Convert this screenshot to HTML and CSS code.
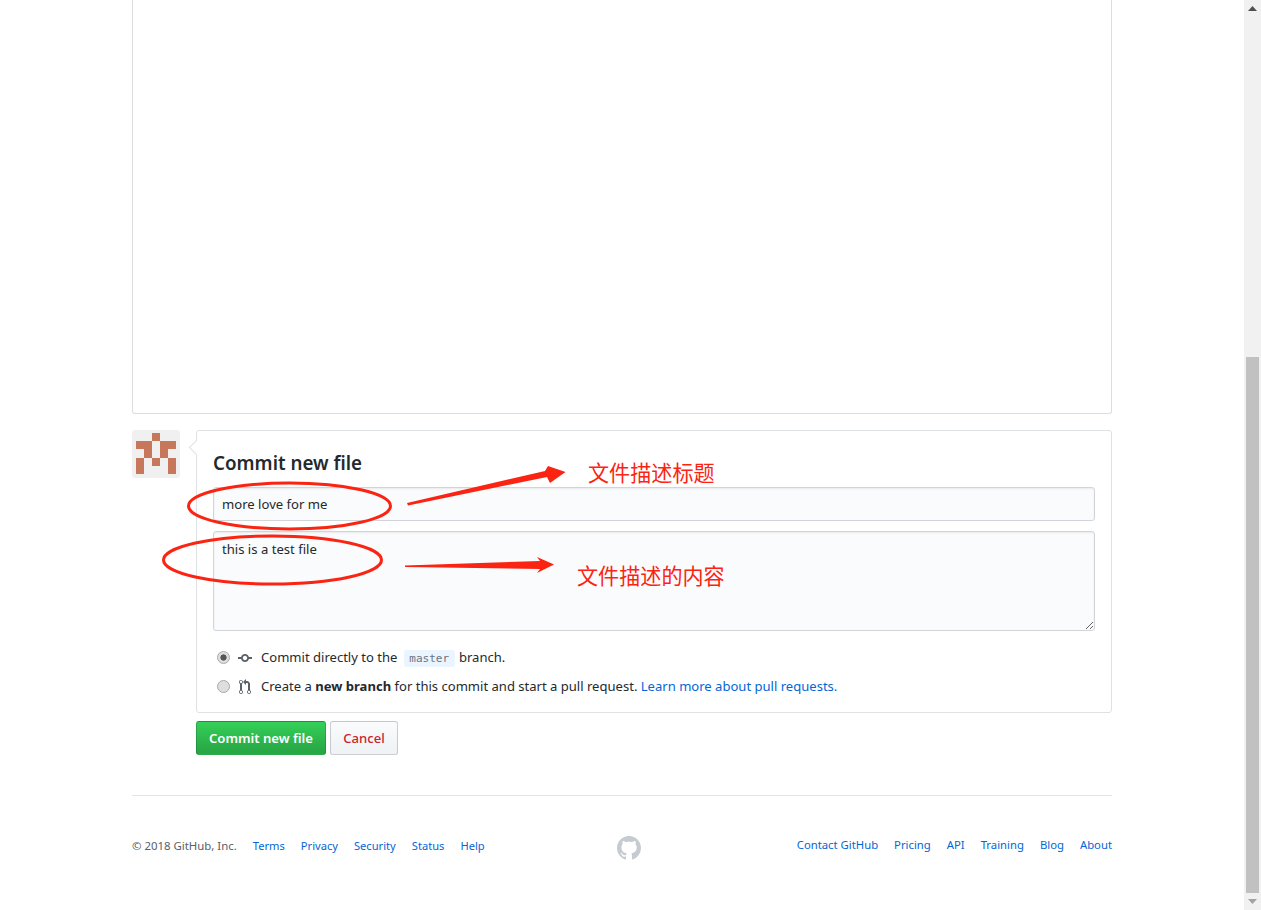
FILE: index.html
```html
<!DOCTYPE html>
<html lang="en">
<head>
<meta charset="utf-8">
<title>Commit new file</title>
<link rel="stylesheet" href="styles.css">
</head>
<body>
<div class="viewport">
  <main class="page">
    <div class="editor"></div>
    <section class="commit">
      <svg class="avatar" viewBox="0 0 48 48" aria-hidden="true">
        <rect width="48" height="48" fill="#f0f0f0"/>
        <g fill="#c8785a">
          <rect x="20" y="3" width="8" height="8"/>
          <rect x="4" y="11" width="16" height="8"/>
          <rect x="28" y="11" width="16" height="8"/>
          <rect x="12" y="19" width="8" height="9"/>
          <rect x="28" y="19" width="8" height="9"/>
          <rect x="20" y="28" width="8" height="8"/>
          <rect x="4" y="28" width="8" height="16"/>
          <rect x="36" y="28" width="8" height="16"/>
        </g>
      </svg>
      <div class="commit-main">
        <form class="commit-box">
          <h3 class="commit-title">Commit new file</h3>
          <input class="field" type="text" value="more love for me">
          <textarea class="field area">this is a test file</textarea>
          <label class="choice first">
            <input class="radio" type="radio" name="target" checked>
            <svg class="octicon" viewBox="0 0 14 16" width="14" height="16"><path d="M10.86 7c-.45-1.72-2-3-3.86-3-1.86 0-3.41 1.28-3.86 3H0v2h3.14c.45 1.72 2 3 3.86 3 1.86 0 3.41-1.28 3.86-3H14V7h-3.14zM7 10.2c-1.22 0-2.2-.98-2.2-2.2 0-1.22.98-2.2 2.2-2.2 1.22 0 2.2.98 2.2 2.2 0 1.22-.98 2.2-2.2 2.2z"/></svg>
            <span>Commit directly to the <code class="branch">master</code> branch.</span>
          </label>
          <label class="choice">
            <input class="radio" type="radio" name="target">
            <svg class="octicon pr" viewBox="0 0 12 16" width="12" height="16"><path d="M11 11.28V5c-.03-.78-.34-1.47-.94-2.06C9.46 2.35 8.78 2.03 8 2H7V0L4 3l3 3V4h1c.27.02.48.11.69.31.21.2.3.42.31.69v6.28A1.993 1.993 0 0 0 10 15a1.993 1.993 0 0 0 1-3.72zm-1 2.92c-.66 0-1.2-.55-1.2-1.2 0-.65.55-1.2 1.2-1.2.65 0 1.2.55 1.2 1.2 0 .65-.55 1.2-1.2 1.2zM4 3c0-1.11-.89-2-2-2a1.993 1.993 0 0 0-1 3.72v6.56A1.993 1.993 0 0 0 2 15a1.993 1.993 0 0 0 1-3.72V4.72c.59-.34 1-.98 1-1.72zm-.8 10c0 .66-.55 1.2-1.2 1.2-.65 0-1.2-.55-1.2-1.2 0-.65.55-1.2 1.2-1.2.65 0 1.2.55 1.2 1.2zM2 4.2C1.34 4.2.8 3.65.8 3c0-.65.55-1.2 1.2-1.2.65 0 1.2.55 1.2 1.2 0 .65-.55 1.2-1.2 1.2z"/></svg>
            <span>Create a <strong>new branch</strong> for this commit and start a pull request. <a href="#">Learn more about pull requests.</a></span>
          </label>
        </form>
        <div class="actions">
          <button class="btn primary" type="button">Commit new file</button>
          <button class="btn cancel" type="button">Cancel</button>
        </div>
      </div>
    </section>
    <footer class="footer">
      <div class="foot-left">
        <span class="copy">© 2018 GitHub, Inc.</span>
        <a href="#">Terms</a><a href="#">Privacy</a><a href="#">Security</a><a href="#">Status</a><a href="#">Help</a>
      </div>
      <svg class="mark" viewBox="0 0 16 16" width="24" height="24"><path d="M8 0C3.58 0 0 3.58 0 8c0 3.54 2.29 6.53 5.47 7.59.4.07.55-.17.55-.38 0-.19-.01-.82-.01-1.49-2.01.37-2.53-.49-2.69-.94-.09-.23-.48-.94-.82-1.13-.28-.15-.68-.52-.01-.53.63-.01 1.08.58 1.23.82.72 1.21 1.87.87 2.33.66.07-.52.28-.87.51-1.07-1.78-.2-3.64-.89-3.64-3.95 0-.87.31-1.59.82-2.15-.08-.2-.36-1.02.08-2.12 0 0 .67-.21 2.2.82.64-.18 1.32-.27 2-.27.68 0 1.36.09 2 .27 1.53-1.04 2.2-.82 2.2-.82.44 1.1.16 1.92.08 2.12.51.56.82 1.27.82 2.15 0 3.07-1.87 3.75-3.65 3.95.29.25.54.73.54 1.48 0 1.07-.01 1.93-.01 2.2 0 .21.15.46.55.38A8.013 8.013 0 0 0 16 8c0-4.42-3.58-8-8-8z"/></svg>
      <div class="foot-right">
        <a href="#">Contact GitHub</a><a href="#">Pricing</a><a href="#">API</a><a href="#">Training</a><a href="#">Blog</a><a href="#">About</a>
      </div>
    </footer>
  </main>
  <div class="scrollbar" aria-hidden="true">
    <svg class="sb-arrow" viewBox="0 0 17 17" width="17" height="17"><path d="M8.500 6 13 11H4z" fill="#505050"/></svg>
    <div class="sb-space"><div class="sb-thumb"></div></div>
    <svg class="sb-arrow" viewBox="0 0 17 17" width="17" height="17"><path d="M4 6h9l-4.500 5z" fill="#a3a3a3"/></svg>
  </div>
  <svg class="marks" viewBox="0 0 1261 910" aria-hidden="true">
    <g fill="none" stroke="#fb2412" stroke-width="3">
      <ellipse cx="289.500" cy="506" rx="101" ry="23"/>
      <ellipse cx="272.500" cy="560" rx="109" ry="24"/>
    </g>
    <g fill="#fb2412">
      <path d="M407 503 545 471 548 466 565.500 472 550 483 547 477 408 505.500z"/>
      <path d="M405 565.500 540 561 537 557 554 564.500 537 573 540 569 405 567z"/>
    </g>
  </svg>
  <span class="note note-a">文件描述标题</span>
  <span class="note note-b">文件描述的内容</span>
</div>
</body>
</html>
```

FILE: styles.css
```css
* { box-sizing: border-box; }
html, body { margin: 0; height: 100%; overflow: hidden; background: #fff; }
body { font: 14px/1.5 "Noto Sans", "Open Sans", "Liberation Sans", sans-serif; color: #24292e; }
a { color: #0366d6; text-decoration: none; }

.viewport { position: relative; display: flex; width: 1261px; height: 910px; overflow: hidden; }
.page { width: 1244px; padding: 0 132px; }

.editor { height: 414px; border: 1px solid #ddd; border-top: 0; border-radius: 0 0 3px 3px; }

.commit { display: flex; gap: 16px; margin-top: 16px; }
.avatar { display: block; width: 48px; height: 48px; border-radius: 3px; flex: none; }
.commit-main { flex: 1; }
.commit-box { position: relative; height: 283px; padding: 21px 16px 0; border: 1px solid #dfe2e5; border-radius: 3px; }
.commit-box::before { content: ""; position: absolute; left: -6px; top: 11px; width: 10px; height: 10px; background: #fff; border-left: 1px solid #dfe2e5; border-bottom: 1px solid #dfe2e5; transform: rotate(45deg); }
.commit-title { margin: 0 0 13px; font-size: 18.800px; line-height: 22px; font-weight: 600; }
.field { display: block; width: 100%; height: 34px; padding: 6px 8px; border: 1px solid #d1d5da; border-radius: 3px; background: #fafbfc; color: #24292e; font: inherit; font-size: 13.100px; line-height: 20px; box-shadow: inset 0 1px 2px rgba(27,31,35,.075); outline: 0; }
.area { height: 100px; margin-top: 10px; padding-top: 7px; }

.choice { display: flex; align-items: center; height: 20px; margin-top: 9px; font-size: 13.050px; }
.choice.first { margin-top: 17px; }
.radio { appearance: none; width: 13px; height: 13px; margin: 0 8px 2px 4px; flex: none; border: 1px solid #a9a9a9; border-radius: 50%; background: #dedede; }
.radio:checked { background: radial-gradient(circle, #555 0 2.800px, #dedede 3.400px); }
.octicon { fill: #586069; flex: none; margin-right: 9px; }
.octicon.pr { margin-left: 1px; margin-right: 10px; }
.branch { display: inline-block; padding: 0 5.500px; margin: 0 1px 0 3px; background: #eaf5ff; border-radius: 3px; color: #6a737d; font: 11px/17px "DejaVu Sans Mono", "Liberation Mono", monospace; }
strong { font-weight: 700; }

.actions { display: flex; gap: 4px; margin-top: 8px; }
.btn { height: 34px; padding: 0; border: 1px solid rgba(27,31,35,.2); border-radius: 3px; white-space: nowrap; font: 600 13.100px/20px "Noto Sans", "Open Sans", sans-serif; }
.primary { width: 130px; color: #fff; background: linear-gradient(#34d058, #28a745 90%); }
.cancel { width: 68px; color: #cb2431; background: linear-gradient(#fafbfc, #eff3f6 90%); font-weight: 500; }

.footer { position: relative; display: flex; justify-content: space-between; align-items: center; margin-top: 40px; height: 101px; padding-bottom: 1px; border-top: 1px solid #e1e4e8; font-size: 11.400px; }
.foot-left a { font-size: 11.150px; }
.foot-right a { font-size: 11.300px; }
.foot-left, .foot-right { display: flex; align-items: baseline; gap: 16px; }
.copy { color: #586069; }
.mark { position: absolute; left: 485px; top: 40px; fill: #c6cbd1; }

.scrollbar { width: 17px; height: 910px; display: flex; flex-direction: column; background: #f1f1f1; flex: none; }
.sb-arrow { display: block; flex: none; }
.sb-space { flex: 1; padding-top: 340px; }
.sb-thumb { width: 13px; height: 536px; margin-left: 2px; background: #c1c1c1; }

.marks { position: absolute; inset: 0; width: 1261px; height: 910px; pointer-events: none; }
.note { position: absolute; color: #fb2412; font: 21.100px/28px "Noto Sans CJK SC", sans-serif; white-space: nowrap; }
.note-a { left: 588px; top: 458px; }
.note-b { left: 577px; top: 561px; }
```
